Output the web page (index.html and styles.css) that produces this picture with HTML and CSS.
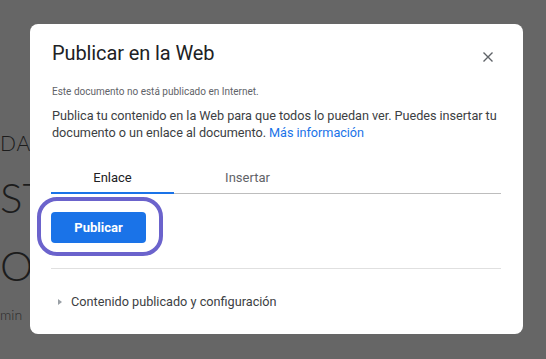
FILE: index.html
```html
<!DOCTYPE html>
<html lang="es">
<head>
<meta charset="UTF-8">
<meta name="viewport" content="width=device-width, initial-scale=1.0">
<title>Publicar en la Web</title>
<link rel="stylesheet" href="styles.css">
</head>
<body>
<div class="page">
  <div class="kicker">DA</div>
  <div class="headline">ST</div>
  <div class="headline second">O</div>
  <div class="meta">min</div>
</div>

<div class="dialog">
  <div class="dialog-header">
    <h1 class="dialog-title">Publicar en la Web</h1>
    <button class="close-button" aria-label="Cerrar">
      <svg width="10" height="10" viewBox="0 0 10 10"><path d="M0.5 0.5 L9.5 9.5 M9.5 0.5 L0.5 9.5" stroke="#5f6368" stroke-width="1.4" fill="none"/></svg>
    </button>
  </div>
  <p class="status">Este documento no está publicado en Internet.</p>
  <p class="intro">Publica tu contenido en la Web para que todos lo puedan ver. Puedes insertar tu documento o un enlace al documento. <a href="#">Más información</a></p>

  <div class="tabs">
    <div class="tab active">Enlace</div>
    <div class="tab wide">Insertar</div>
  </div>

  <div class="publish-row">
    <div class="publish-wrap">
      <button class="publish-button">Publicar</button>
      <span class="highlight"></span>
    </div>
  </div>

  <div class="expander">
    <span class="caret"></span>
    <span>Contenido publicado y configuración</span>
  </div>
</div>
</body>
</html>
```

FILE: styles.css
```css
body {
  margin: 0;
  width: 546px;
  height: 359px;
  overflow: hidden;
  background-color: #666666;
  font-family: Roboto, "Liberation Sans", sans-serif;
  position: relative;
}

/* page behind the overlay */
.page {
  padding-top: 130px;
  font-family: Lato, "Open Sans", sans-serif;
  font-weight: 300;
  color: #1c1c1c;
}

.kicker {
  font-size: 21px;
  line-height: 26px;
  letter-spacing: 1px;
}

.headline {
  font-size: 42px;
  line-height: 50px;
  margin-top: 16px;
}

.headline.second {
  margin-top: 18px;
}

.meta {
  font-size: 14px;
  margin-top: 16px;
  color: #2a2a2a;
}

/* dialog */
.dialog {
  position: absolute;
  left: 30px;
  top: 24px;
  width: 493px;
  height: 310px;
  box-sizing: border-box;
  padding: 15px 22px 0 21px;
  background-color: #fff;
  border-radius: 8px;
}

.dialog-header {
  display: flex;
  justify-content: space-between;
  align-items: center;
}

.dialog-title {
  margin: 0 0 0 1px;
  font-size: 20px;
  font-weight: 400;
  line-height: 28px;
  letter-spacing: -0.1px;
  color: #202124;
}

.close-button {
  border: none;
  background: none;
  padding: 0;
  width: 20px;
  height: 20px;
  display: flex;
  align-items: center;
  justify-content: center;
  margin-right: 3px;
  margin-top: 8px;
}

.status {
  margin: 18px 0 0 1px;
  font-size: 10px;
  line-height: 14px;
  color: #5f6368;
}

.intro {
  margin: 8px 0 0 1px;
  font-size: 12.7px;
  line-height: 17px;
  letter-spacing: -0.05px;
  color: #3c4043;
}

.intro a {
  color: #1a73e8;
  text-decoration: none;
}

.tabs {
  display: flex;
  margin-top: 23px;
  border-bottom: 1px solid #bdbdbd;
}

.tab {
  width: 123px;
  height: 29px;
  line-height: 28px;
  text-align: center;
  font-size: 13px;
  color: #5f6368;
}

.tab.wide {
  width: 147px;
}

.tab.active {
  color: #202124;
  box-shadow: inset 0 -2px 0 #1a73e8;
  margin-bottom: -1px;
  height: 30px;
}

.publish-row {
  padding: 18px 0 25px;
  border-bottom: 1px solid #e0e0e0;
}

.publish-wrap {
  position: relative;
  display: inline-block;
  vertical-align: top;
}

.publish-button {
  display: block;
  width: 95px;
  height: 31px;
  border: none;
  border-radius: 4px;
  background-color: #1a73e8;
  color: #fff;
  font-family: Roboto, "Liberation Sans", sans-serif;
  font-size: 13px;
  font-weight: 700;
}

/* annotation ring */
.highlight {
  position: absolute;
  left: -14px;
  top: -15px;
  right: -17px;
  bottom: -13px;
  border: 4px solid #6b63cc;
  border-radius: 20px;
}

.expander {
  display: flex;
  align-items: center;
  margin-top: 24px;
  padding-left: 7px;
  font-size: 12.7px;
  line-height: 17px;
  color: #3c4043;
}

.caret {
  width: 0;
  height: 0;
  border-top: 3px solid transparent;
  border-bottom: 3px solid transparent;
  border-left: 4px solid #9aa0a6;
  margin-right: 9px;
}
```
